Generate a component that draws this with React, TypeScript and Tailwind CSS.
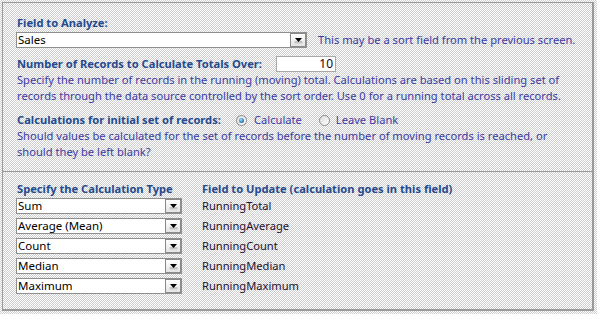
import React from "react";

type DropdownProps = {
  value: string;
  className: string;
};

// Windows-style combo box with a small arrow button
const Dropdown = ({ value, className }: DropdownProps) => {
  return (
    <div className={`flex h-[16px] items-stretch border border-[#8f8f8f] bg-white ${className}`}>
      <span className="flex-1 truncate pl-[1px] text-[11.5px] leading-[14px] text-black">{value}</span>
      <span className="flex w-[16px] items-center justify-center border border-[#8a8a8a] bg-gradient-to-b from-white to-[#e4e4e4]">
        <svg width="9" height="7" viewBox="0 0 9 7">
          <rect x="0.5" y="4" width="8" height="2.5" fill="#c4c4c4" />
          <path d="M1 1h7L4.5 5z" fill="#000" />
        </svg>
      </span>
    </div>
  );
};

const Radio = ({ checked }: { checked: boolean }) => {
  return (
    <span className="flex h-[11px] w-[11px] items-center justify-center rounded-full border border-[#8a8a8a] bg-gradient-to-br from-[#dcdcdc] to-white">
      {checked && (
        <span className="h-[5px] w-[5px] rounded-full bg-[radial-gradient(circle_at_40%_35%,#9fe0ff,#1a6fb0_70%)]" />
      )}
    </span>
  );
};

const rows = [
  { type: "Sum", field: "RunningTotal" },
  { type: "Average (Mean)", field: "RunningAverage" },
  { type: "Count", field: "RunningCount" },
  { type: "Median", field: "RunningMedian" },
  { type: "Maximum", field: "RunningMaximum" },
];

export default function App() {
  return (
    <div className="h-[314px] w-[597px] bg-[repeating-conic-gradient(#cdcdcd_0_25%,#ffffff_0_50%)] bg-[length:2px_2px] pl-[2px] pt-[2px] font-['Noto_Sans',sans-serif] text-[11.15px]">
      <div className="h-[309px] w-[592px] border border-r-2 border-b-2 border-[#9a9a9a]">
        {/* 上部: 集計対象 */}
        <div className="h-[169px] border-b border-[#9a9a9a] pl-[13px] pt-[12px]">
          <div className="h-[16px] pl-[1px] font-bold leading-[16px] text-[#244a8f]">Field to Analyze:</div>
          <div className="mt-[1px] flex items-center">
            <Dropdown value="Sales" className="w-[291px]" />
            <span className="ml-[11px] leading-[16px] text-[#3a3aa3]">This may be a sort field from the previous screen.</span>
          </div>
          <div className="mt-[8px] flex h-[16px] items-center">
            <span className="w-[260px] whitespace-nowrap pl-[1px] font-bold leading-[16px] text-[#244a8f]">Number of Records to Calculate Totals Over:</span>
            <span className="h-[16px] w-[60px] border border-[#a8a8a8] bg-white pr-[2px] text-right text-[12px] leading-[14px] text-[#1a0010]">10</span>
          </div>
          <p className="pl-[1px] leading-[16px] text-[#3a3aa3]">
            Specify the number of records in the running (moving) total. Calculations are based on this sliding set of
            <br />
            records through the data source controlled by the sort order. Use 0 for a running total across all records.
          </p>
          <div className="mt-[8px] flex h-[16px] items-center">
            <span className="w-[220px] pl-[1px] font-bold leading-[16px] text-[#244a8f]">Calculations for initial set of records:</span>
            <Radio checked />
            <span className="ml-[7px] leading-[16px] text-[#3a3aa3]">Calculate</span>
            <span className="ml-[17px]">
              <Radio checked={false} />
            </span>
            <span className="ml-[6px] leading-[16px] text-[#3a3aa3]">Leave Blank</span>
          </div>
          <p className="pl-[1px] leading-[16px] text-[#3a3aa3]">
            Should values be calculated for the set of records before the number of moving records is reached, or
            <br />
            should they be left blank?
          </p>
        </div>

        {/* 下部: 計算の種類 */}
        <div className="pl-[13px] pt-[9px]">
          <div className="flex h-[16px] font-bold leading-[16px] text-[#244a8f]">
            <span className="w-[186px] pl-[1px]">Specify the Calculation Type</span>
            <span>Field to Update (calculation goes in this field)</span>
          </div>
          <div className="mt-[1px] flex flex-col gap-[4px]">
            {rows.map((row) => (
              <div key={row.type} className="flex h-[16px] items-center">
                <Dropdown value={row.type} className="w-[166px]" />
                <span className="ml-[20px] leading-[16px] text-[#1e1030]">{row.field}</span>
              </div>
            ))}
          </div>
        </div>
      </div>
    </div>
  );
}
